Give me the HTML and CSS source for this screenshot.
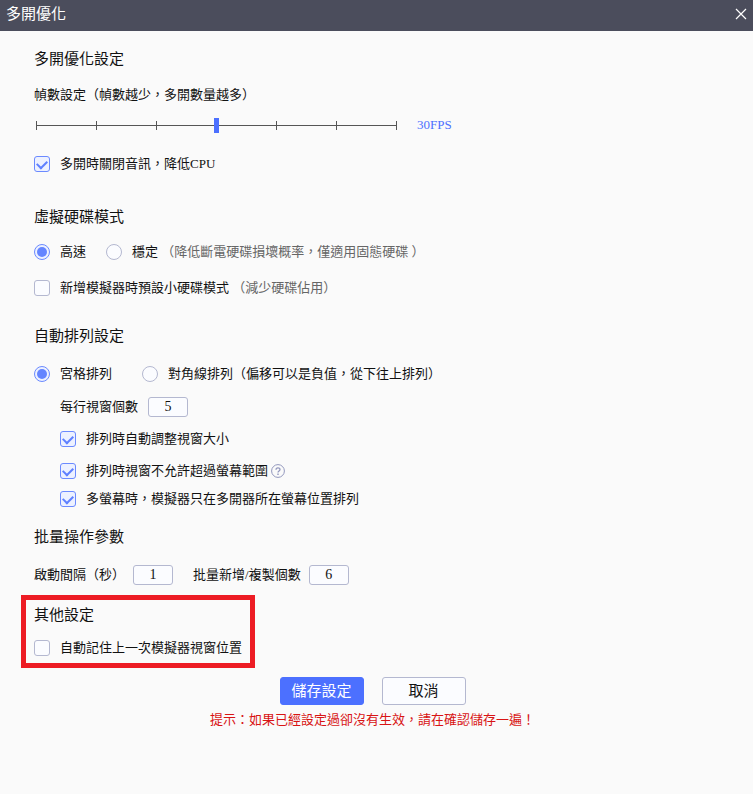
FILE: index.html
```
<!DOCTYPE html>
<html lang="zh-Hant">
<head>
    <meta charset="UTF-8">
    <meta name="viewport" content="width=device-width, initial-scale=1.0">
    <title>多開優化</title>
    <link rel="stylesheet" href="styles.css">
</head>
<body>
    <header class="title-bar">
        <h1>多開優化</h1>
        <button type="button" class="close" aria-label="關閉">
            <svg width="12" height="12" viewBox="0 0 12 12" fill="none" stroke="#fff" stroke-width="1.2">
                <path d="M1 1L11 11M11 1L1 11"/>
            </svg>
        </button>
    </header>

    <form class="settings">
        <section class="performance">
            <h2>多開優化設定</h2>
            <label class="slider-label" for="fps">幀數設定（幀數越少，多開數量越多）</label>
            <div class="slider-row">
                <input type="range" class="slider" id="fps" min="0" max="60" value="30">
                <output class="fps-value" for="fps">30FPS</output>
            </div>
            <label class="option"><input type="checkbox" checked>多開時關閉音訊，降低CPU</label>
        </section>

        <section class="disk">
            <h2>虛擬硬碟模式</h2>
            <div class="row disk-modes">
                <label class="option"><input type="radio" name="disk" checked>高速</label>
                <label class="option"><input type="radio" name="disk"><span>穩定 <span class="note">（降低斷電硬碟損壞概率，僅適用固態硬碟 ）</span></span></label>
            </div>
            <label class="option"><input type="checkbox"><span>新增模擬器時預設小硬碟模式 <span class="note">（減少硬碟佔用）</span></span></label>
        </section>

        <section class="arrange">
            <h2>自動排列設定</h2>
            <div class="row arrange-modes">
                <label class="option"><input type="radio" name="arrange" checked>宮格排列</label>
                <label class="option"><input type="radio" name="arrange">對角線排列（偏移可以是負值，從下往上排列）</label>
            </div>
            <div class="sub-options">
                <label class="field per-row">每行視窗個數 <input type="text" class="number" value="5"></label>
                <label class="option"><input type="checkbox" checked>排列時自動調整視窗大小</label>
                <div class="row with-help">
                    <label class="option"><input type="checkbox" checked>排列時視窗不允許超過螢幕範圍</label>
                    <svg class="help" width="14" height="14" viewBox="0 0 14 14" fill="none" stroke="#9297bd">
                        <circle cx="7" cy="7" r="6.4"/>
                        <path d="M5 5.8C5 3.2 9 3.2 9 5.6C9 7 7 6.9 7 8.5" stroke-width="1.3"/>
                        <path d="M7 9.5V10.9" stroke-width="1.4"/>
                    </svg>
                </div>
                <label class="option last"><input type="checkbox" checked>多螢幕時，模擬器只在多開器所在螢幕位置排列</label>
            </div>
        </section>

        <section class="batch">
            <h2>批量操作參數</h2>
            <div class="row batch-fields">
                <label class="field">啟動間隔（秒） <input type="text" class="number" value="1"></label>
                <label class="field">批量新增/複製個數 <input type="text" class="number" value="6"></label>
            </div>
        </section>

        <section class="other">
            <h2>其他設定</h2>
            <label class="option"><input type="checkbox">自動記住上一次模擬器視窗位置</label>
        </section>

        <footer class="actions">
            <div class="buttons">
                <button type="submit" class="btn primary">儲存設定</button>
                <button type="button" class="btn">取消</button>
            </div>
            <p class="tip">提示：如果已經設定過卻沒有生效，請在確認儲存一遍！</p>
        </footer>
    </form>
</body>
</html>
```

FILE: styles.css
```
* {
    box-sizing: border-box;
}

body {
    margin: 0;
    background-color: #fafafa;
    color: #111;
    font-family: "Liberation Serif", "Noto Sans CJK TC", sans-serif;
    font-size: 13px;
    line-height: 20px;
}

h1,
h2 {
    margin: 0;
    font-size: 15px;
    font-weight: normal;
    line-height: 20px;
}

input,
button {
    margin: 0;
    font-family: inherit;
    color: inherit;
}

/* Title bar */
.title-bar {
    display: flex;
    justify-content: space-between;
    align-items: center;
    height: 31px;
    padding: 0 6px 4px;
    background-color: #4b4d5c;
    color: #fff;
}

.close {
    display: flex;
    padding: 0;
    border: none;
    background: none;
    cursor: pointer;
}

/* Sections */
.settings {
    padding: 18px 0 0 34px;
}

.performance,
.disk,
.arrange,
.batch {
    display: flex;
    flex-direction: column;
    align-items: flex-start;
}

.row,
.option,
.field {
    display: flex;
    align-items: center;
}

.option {
    gap: 10px;
}

.field {
    gap: 8px;
}

.note {
    color: #666;
}

/* Frame rate slider */
.slider-label {
    margin-top: 16px;
}

.slider-row {
    display: flex;
    align-items: center;
    gap: 20px;
    margin: 10px 0 19px 2px;
}

.slider {
    appearance: none;
    width: 361px;
    height: 20px;
    background:
        linear-gradient(#555, #555) 0 center / 100% 1px no-repeat,
        linear-gradient(to right, #555 1px, transparent 1px) 0 center / 60px 9px repeat-x;
}

.slider::-webkit-slider-thumb {
    appearance: none;
    width: 5px;
    height: 15px;
    background-color: #4c70ff;
}

.fps-value {
    color: #4c70ff;
}

/* Check boxes and radios */
input[type="checkbox"],
input[type="radio"] {
    appearance: none;
    display: grid;
    place-items: center;
    flex: none;
    width: 16px;
    height: 16px;
    border: 1px solid #b4b8d0;
    border-radius: 3px;
    background-color: #fbfcff;
}

input[type="radio"] {
    border-radius: 50%;
}

input[type="checkbox"]:checked,
input[type="radio"]:checked {
    border-color: #6b8aff;
    background-color: #edf1ff;
}

input[type="checkbox"]:checked::after {
    content: "";
    width: 8px;
    height: 5px;
    margin-bottom: 2px;
    border: solid #5f80ff;
    border-width: 0 0 2px 2px;
    transform: rotate(-45deg);
}

input[type="radio"]:checked::after {
    content: "";
    width: 10px;
    height: 10px;
    border-radius: 50%;
    background-color: #6485ff;
}

.number {
    width: 40px;
    height: 20px;
    padding: 0;
    border: 1px solid #b4b8d0;
    border-radius: 3px;
    background-color: #fbfcff;
    font-size: 14px;
    text-align: center;
}

/* Virtual disk */
.disk {
    margin-top: 33px;
}

.disk-modes {
    gap: 20px;
    margin: 15px 0 16px;
}

/* Window arrangement */
.arrange {
    margin-top: 28px;
}

.arrange-modes {
    gap: 30px;
    margin: 18px 0 13px;
}

.sub-options {
    display: flex;
    flex-direction: column;
    align-items: flex-start;
    gap: 12px;
    padding-left: 26px;
}

.per-row {
    gap: 10px;
}

.with-help {
    gap: 3px;
}

.sub-options .last {
    margin-top: -4px;
}

/* Batch operations */
.batch {
    gap: 18px;
    margin-top: 18px;
}

.batch-fields {
    gap: 20px;
}

/* Highlighted group */
.other {
    width: fit-content;
    margin: 10px 0 0 -13px;
    padding: 5px 8px;
    border: 5px solid #ed1c24;
}

.other .option {
    margin-top: 13px;
}

/* Bottom buttons */
.actions {
    margin: 9px 0 0 -34px;
    padding-right: 8px;
    text-align: center;
}

.buttons {
    display: flex;
    justify-content: center;
    gap: 18px;
}

.btn {
    width: 84px;
    height: 28px;
    padding: 0;
    border: 1px solid #b4b8d0;
    border-radius: 3px;
    background-color: #fbfcff;
    font-size: 15px;
    line-height: 24px;
    cursor: pointer;
}

.btn.primary {
    border-color: #4c70ff;
    background-color: #4c70ff;
    color: #fff;
}

.tip {
    margin: 5px 0 0;
    color: #d81414;
}
```
